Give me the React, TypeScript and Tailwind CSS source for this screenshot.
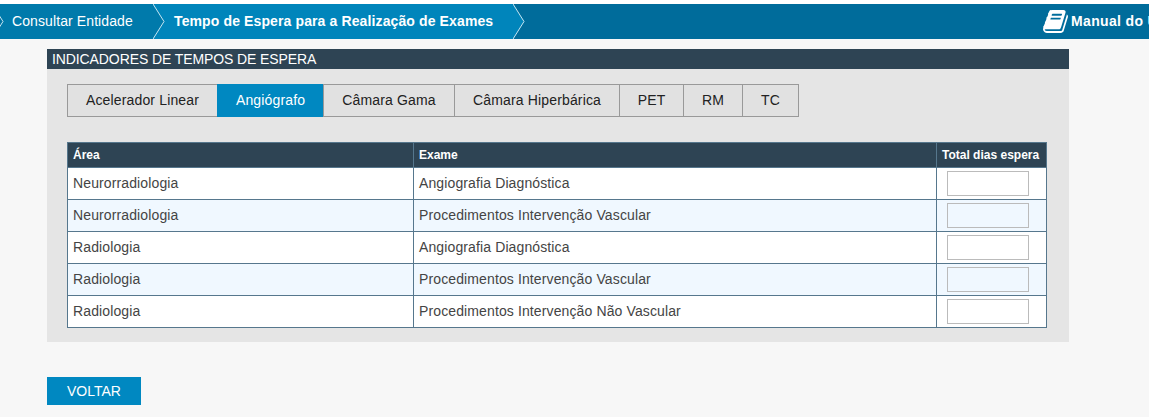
type Row = { area: string; exame: string };

const tabs = [
  { label: "Acelerador Linear", width: "w-[150px]" },
  { label: "Angiógrafo", width: "w-[106px]" },
  { label: "Câmara Gama", width: "w-[131px]" },
  { label: "Câmara Hiperbárica", width: "w-[165px]" },
  { label: "PET", width: "w-[64px]" },
  { label: "RM", width: "w-[59px]" },
  { label: "TC", width: "w-[56px]" },
];

const rows: Row[] = [
  { area: "Neurorradiologia", exame: "Angiografia Diagnóstica" },
  { area: "Neurorradiologia", exame: "Procedimentos Intervenção Vascular" },
  { area: "Radiologia", exame: "Angiografia Diagnóstica" },
  { area: "Radiologia", exame: "Procedimentos Intervenção Vascular" },
  { area: "Radiologia", exame: "Procedimentos Intervenção Não Vascular" },
];

function BookIcon() {
  return (
    <svg viewBox="0 128 1664 1536" className="h-[23px] w-[25px] shrink-0 fill-white" aria-hidden="true">
      <path d="M1639 478q40 57 18 129l-275 906q-19 64-76.500 107.500t-122.500 43.500h-923q-77 0-148.500-53.500t-99.500-131.500q-24-67-2-127 0-4 3-27t4-37q1-8-3-21.500t-3-19.500q2-11 8-21t16.500-23.500 16.500-23.500q23-38 45-91.500t30-91.500q3-10 .5-30t-.5-28q3-11 17-28t17-23q21-36 42-92t25-90q1-9-2.500-32t.5-28q4-13 22-30.500t22-22.500q19-26 42.500-84.500t27.500-96.500q1-8-3-25.500t-2-26.500q2-8 9-18t18-23 17-21q8-12 16.500-30.500t15-35 16-36 19.500-32 26.500-23.500 36-11.500 47.500 5.500l-1 3q38-9 51-9h761q74 0 114 56t18 130l-274 906q-36 119-71.500 153.500t-128.500 34.500h-869q-27 0-38 15-11 16-1 43 24 70 144 70h923q29 0 56-15.500t35-41.500l300-987q7-22 5-57 38 15 59 43zm-1064 2q-4 13 2 22.500t20 9.500h608q13 0 25.500-9.500t16.500-22.500l21-64q4-13-2-22.500t-20-9.500h-608q-13 0-25.500 9.500t-16.500 22.500zm-83 256q-4 13 2 22.500t20 9.500h608q13 0 25.500-9.500t16.500-22.500l21-64q4-13-2-22.500t-20-9.500h-608q-13 0-25.500 9.500t-16.500 22.500z" />
    </svg>
  );
}

function Chevron({ left, right }: { left: string; right: string }) {
  return (
    <svg viewBox="0 0 12 35" className={`h-[35px] w-3 shrink-0 ${right}`} aria-hidden="true">
      <path d="M0 0L11 17.500L0 35Z" className={left} />
      <path d="M0 0L11 17.500L0 35" fill="none" stroke="#c5e5f1" strokeWidth="1" />
    </svg>
  );
}

export default function App() {
  return (
    <div className="h-[417px] w-full overflow-hidden bg-[#f7f7f7] font-['Liberation_Sans',Arial,sans-serif] text-sm text-[#444]">
      <nav className="flex h-[39px] overflow-hidden border-t-4 border-white bg-[#006c9b] text-white">
        <div className="-ml-2 flex shrink-0">
          <Chevron left="fill-[#0073a3]" right="bg-[#007aab]" />
        </div>
        <a className="flex w-[149px] shrink-0 items-center bg-[#007aab] pb-px pl-2 text-sm tracking-[0.1px] whitespace-nowrap">
          Consultar Entidade
        </a>
        <Chevron left="fill-[#007aab]" right="bg-[#0085bb]" />
        <a className="flex w-[348px] shrink-0 items-center bg-[#0085bb] pb-px pl-[9px] text-sm font-bold tracking-[0.12px] whitespace-nowrap">
          Tempo de Espera para a Realização de Exames
        </a>
        <Chevron left="fill-[#0085bb]" right="bg-[#006c9b]" />
        <a className="ml-auto flex w-[106px] shrink-0 items-center gap-[3px] text-sm font-bold tracking-[0.35px] whitespace-nowrap">
          <BookIcon />
          <span className="pb-px">Manual do Utilizador</span>
        </a>
      </nav>
      <main className="ml-[47px] w-[1022px] pt-[10px]">
        <h1 className="h-5 bg-[#2e4454] pl-[5px] text-sm leading-[21px] tracking-[-0.1px] text-white">INDICADORES DE TEMPOS DE ESPERA</h1>
        <section className="h-[273px] bg-[#e5e5e5] px-5 pt-[15px]">
          <div className="flex w-[732px] border-r border-[#999]">
            {tabs.map((tab, i) => (
              <button
                key={tab.label}
                className={`${tab.width} h-[33px] shrink-0 border-y border-l pb-px text-center text-sm tracking-[0.15px] whitespace-nowrap ${
                  i === 1 ? "border-[#0088c1] bg-[#0088c1] text-white" : "border-[#999] bg-[#e1e1e1] text-[#222]"
                }`}
              >
                {tab.label}
              </button>
            ))}
          </div>
          <table className="mt-[25px] w-[980px] table-fixed border-separate border-spacing-0 border-t border-l border-[#56778d]">
            <colgroup>
              <col className="w-[346px]" />
              <col className="w-[523px]" />
              <col className="w-[110px]" />
            </colgroup>
            <thead>
              <tr className="h-[25px] bg-[#2e4454] text-left text-xs text-white">
                <th className="border-r border-b border-[#56778d] py-0 pl-[5px]">Área</th>
                <th className="border-r border-b border-[#56778d] py-0 pl-[5px]">Exame</th>
                <th className="border-r border-b border-[#56778d] py-0 pl-[5px] whitespace-nowrap">Total dias espera</th>
              </tr>
            </thead>
            <tbody>
              {rows.map((row, i) => (
                <tr key={i} className="h-8 bg-white tracking-[0.12px] even:bg-[#f0f8ff]">
                  <td className="border-r border-b border-[#56778d] pt-0 pb-0.5 pl-[5px]">{row.area}</td>
                  <td className="border-r border-b border-[#56778d] pt-0 pb-0.5 pl-[5px]">{row.exame}</td>
                  <td className="border-r border-b border-[#56778d] py-0 pl-[10px]">
                    <input
                      aria-label="Total dias espera"
                      className="block h-[25px] w-[82px] border border-[#bbb] bg-transparent px-1"
                    />
                  </td>
                </tr>
              ))}
            </tbody>
          </table>
        </section>
        <button className="mt-[35px] block h-7 w-[94px] bg-[#0088c1] text-sm text-white">VOLTAR</button>
      </main>
    </div>
  );
}
